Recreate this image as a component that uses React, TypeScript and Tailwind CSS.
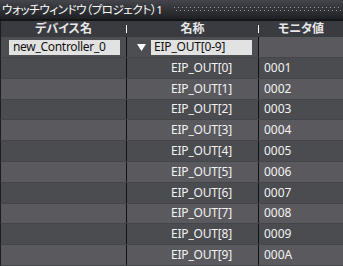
import React from "react";

const rows = [
  { name: "EIP_OUT[0]", value: "0001" },
  { name: "EIP_OUT[1]", value: "0002" },
  { name: "EIP_OUT[2]", value: "0003" },
  { name: "EIP_OUT[3]", value: "0004" },
  { name: "EIP_OUT[4]", value: "0005" },
  { name: "EIP_OUT[5]", value: "0006" },
  { name: "EIP_OUT[6]", value: "0007" },
  { name: "EIP_OUT[7]", value: "0008" },
  { name: "EIP_OUT[8]", value: "0009" },
  { name: "EIP_OUT[9]", value: "000A" },
];

const GripDots = () => (
  <svg className="h-[6px] flex-1" aria-hidden>
    <defs>
      <pattern id="dots" width="4" height="6" patternUnits="userSpaceOnUse">
        <rect x="0" y="0" width="1" height="1" fill="#9a9ca2" />
        <rect x="2" y="3" width="1" height="1" fill="#9a9ca2" />
      </pattern>
    </defs>
    <rect width="100%" height="100%" fill="url(#dots)" />
  </svg>
);

const App = () => {
  return (
    <div className="w-[343px] h-[266px] overflow-hidden bg-[#4b4c50] text-[12px] leading-none font-['Noto_Sans','Noto_Sans_CJK_JP',sans-serif]">
      {/* Title bar */}
      <div className="flex items-center gap-x-3 h-[19px] pl-[2px] pr-px bg-gradient-to-b from-[#44464c] to-[#1f2023]">
        <span className="text-white text-[11.5px] whitespace-nowrap [font-feature-settings:'palt'] tracking-[-0.4px]">
          ウォッチウィンドウ（プロジェクト）1
        </span>
        <GripDots />
      </div>
      <div className="h-[2px] bg-[#141517]" />

      {/* Header */}
      <div className="grid grid-cols-[125px_1px_131px_1px_1fr] h-[16px] bg-[#3a3b40] border-l border-[#1c1d20]">
        <div className="flex items-center justify-center text-[#e8e8e8] font-bold [font-feature-settings:'palt']">
          デバイス名
        </div>
        <div className="flex items-center">
          <div className="w-px h-[8px] bg-white" />
        </div>
        <div className="flex items-center justify-center text-[#e8e8e8] font-bold">
          名称
        </div>
        <div className="flex items-center">
          <div className="w-px h-[8px] bg-white" />
        </div>
        <div className="flex items-center justify-center text-[#e8e8e8] font-bold [font-feature-settings:'palt']">
          モニタ値
        </div>
      </div>

      {/* Input row */}
      <div className="grid grid-cols-[125px_1px_131px_1px_1fr] h-[21px] border-l border-[#1c1d20] border-b border-b-[#444549]">
        <div className="flex items-center pl-[8px] bg-[#4d4e52]">
          <div className="flex items-center w-[111px] h-[15px] pl-[4px] bg-[#e2e2e2] text-[#111] tracking-[-0.3px]">
            new_Controller_0
          </div>
        </div>
        <div className="bg-[#111]" />
        <div className="flex items-center pl-[10px] bg-[#4d4e52]">
          <svg width="9" height="7" viewBox="0 0 9 7" className="mr-[5px]">
            <polygon points="0,0 9,0 4.5,7" fill="#ffffff" />
          </svg>
          <div className="flex items-center w-[101px] h-[15px] pl-[3px] bg-[#e2e2e2] text-[#111] tracking-[-0.2px]">
            EIP_OUT[0-9]
          </div>
        </div>
        <div className="bg-[#111]" />
        <div className="bg-[#5a5a5e]" />
      </div>

      {/* Data rows */}
      {rows.map((row, i) => (
        <div
          key={row.name}
          className={`grid grid-cols-[125px_1px_131px_1px_1fr] h-[20.8px] border-l border-[#1c1d20] border-b border-b-[#444549] text-[#f2f2f2] ${
            i % 2 === 0 ? "bg-[#4b4c50]" : "bg-[#5a5a5e]"
          }`}
        >
          <div />
          <div className="bg-[#111]" />
          <div className="flex items-center pl-[44px] tracking-[-0.2px]">{row.name}</div>
          <div className="bg-[#111]" />
          <div className="flex items-center pl-[5px]">{row.value}</div>
        </div>
      ))}
    </div>
  );
};

export default App;
